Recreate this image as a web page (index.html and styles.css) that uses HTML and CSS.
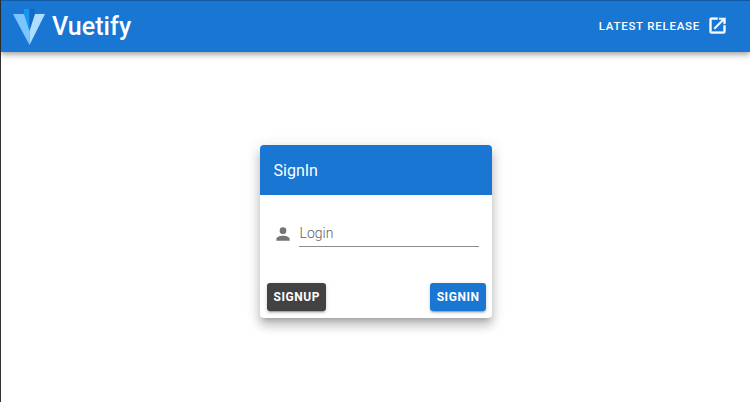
FILE: index.html
```html
<!DOCTYPE html>
<html lang="en">
<head>
<meta charset="utf-8">
<title>Vuetify</title>
<link rel="stylesheet" href="styles.css">
</head>
<body>
<div class="app">
  <header class="bar">
    <div class="brand">
      <svg class="logo" viewBox="0 0 32 36" width="32" height="36" aria-hidden="true">
        <polygon fill="#1697f6" points="11,0 16.5,0 16.5,22 11,5"/>
        <polygon fill="#1867c0" points="16.5,0 22,0 22,5 16.5,22"/>
        <polygon fill="#7bc6ff" points="0,5 11,5 16.5,22 16.5,36"/>
        <polygon fill="#aeddff" points="32,5 22,5 16.5,22 16.5,36"/>
      </svg>
      <span class="brand-name">Vuetify</span>
    </div>
    <a class="release">
      <span>Latest Release</span>
      <svg class="ext" viewBox="0 0 24 24" width="21" height="21" aria-hidden="true"><path fill="#fff" stroke="#fff" stroke-width=".6" d="M14 3v2h3.59l-9.83 9.83 1.41 1.41L19 6.41V10h2V3m-2 16H5V5h7V3H5a2 2 0 0 0-2 2v14a2 2 0 0 0 2 2h14a2 2 0 0 0 2-2v-7h-2v7z"/></svg>
    </a>
  </header>
  <main class="main">
    <section class="card">
      <div class="card-head">SignIn</div>
      <div class="card-body">
        <svg class="person" viewBox="0 0 24 24" width="20" height="20" aria-hidden="true"><path fill="#757575" d="M12 4a4 4 0 0 1 4 4 4 4 0 0 1-4 4 4 4 0 0 1-4-4 4 4 0 0 1 4-4m0 10c4.42 0 8 1.79 8 4v2H4v-2c0-2.21 3.58-4 8-4z"/></svg>
        <div class="field"><span class="label">Login</span></div>
      </div>
      <div class="card-actions">
        <button class="btn btn-dark">Signup</button>
        <button class="btn btn-blue">SignIn</button>
      </div>
    </section>
  </main>
</div>
</body>
</html>
```
FILE: styles.css
```css
* { box-sizing: border-box; }
html, body { margin: 0; height: 100%; }
body {
  background: #fff;
  font-family: Roboto, sans-serif;
  overflow: hidden;
}
.app {
  height: 402px;
  width: 750px;
  border-left: 1px solid #333;
  display: flex;
  flex-direction: column;
}
.bar {
  height: 52px;
  flex: none;
  background: #1976d2;
  border-top: 1px solid #1259a6;
  display: flex;
  align-items: center;
  justify-content: space-between;
  padding: 0 22px 0 12px;
  box-shadow: 0 2px 4px -1px rgba(0,0,0,.2), 0 4px 5px 0 rgba(0,0,0,.14), 0 1px 10px 0 rgba(0,0,0,.12);
  position: relative;
}
.brand { display: flex; align-items: center; gap: 7px; color: #fff; }
.brand-name { font-size: 25px; font-weight: 500; line-height: 32px; letter-spacing: .05px; }
.logo { margin-top: 1px; }
.release {
  display: flex;
  align-items: center;
  gap: 7px;
  padding-bottom: 2px;
  color: #fff;
  font-size: 11.5px;
  font-weight: 500;
  letter-spacing: .75px;
  text-transform: uppercase;
}
.main { flex: 1; display: flex; flex-direction: column; align-items: center; padding: 93px 0 0 0; }
.card {
  width: 232px;
  height: 173px;
  background: #fff;
  border-radius: 4px;
  display: flex;
  flex-direction: column;
  box-shadow: 0 5px 5px -3px rgba(0,0,0,.2), 0 8px 10px 1px rgba(0,0,0,.14), 0 3px 14px 2px rgba(0,0,0,.12);
  overflow: hidden;
}
.card-head {
  height: 50px;
  flex: none;
  background: #1976d2;
  color: #fff;
  font-size: 16px;
  font-weight: 400;
  display: flex;
  align-items: center;
  padding: 0 14px;
}
.card-body {
  flex: 1;
  display: flex;
  align-items: flex-start;
  padding: 26px 13px 0 13px;
  gap: 6px;
}
.person { margin-top: 3px; }
.field {
  flex: 1;
  height: 26px;
  padding-bottom: 2px;
  border-bottom: 1px solid #8c8c8c;
  display: flex;
  align-items: center;
}
.label { font-size: 14px; font-weight: 300; color: #616161; padding-left: 1px; }
.card-actions {
  display: flex;
  justify-content: space-between;
  padding: 0 6px 7px 7px;
}
.btn {
  height: 28px;
  border: 0;
  border-radius: 3px;
  color: #fff;
  font-family: inherit;
  font-size: 12px;
  font-weight: 700;
  letter-spacing: .55px;
  text-transform: uppercase;
  padding: 0 6px 0 7px;
  box-shadow: 0 3px 1px -2px rgba(0,0,0,.2), 0 2px 2px 0 rgba(0,0,0,.14), 0 1px 5px 0 rgba(0,0,0,.12);
}
.btn-dark { background: #424242; }
.btn-blue { background: #1976d2; }
```
